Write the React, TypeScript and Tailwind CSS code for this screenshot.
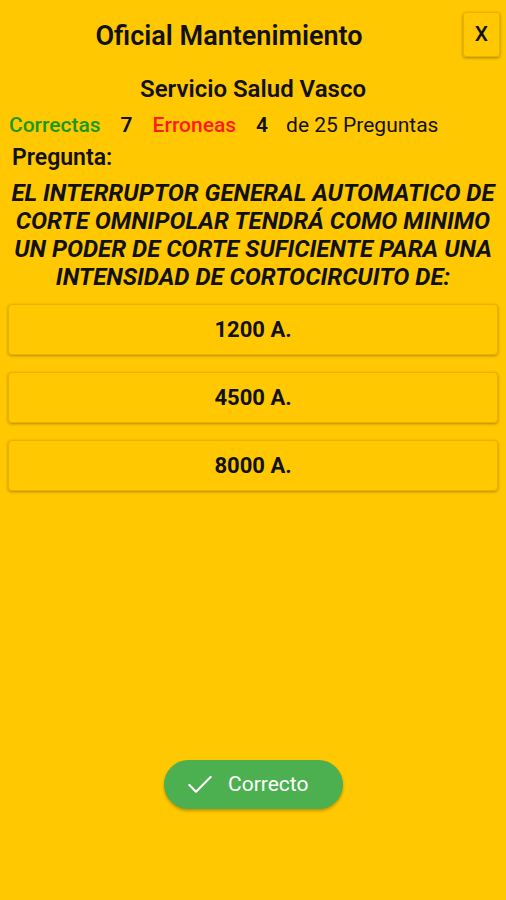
import { Check } from 'lucide-react';

const options = ['1200 A.', '4500 A.', '8000 A.'];

export default function App() {
  return (
    <div className="flex h-[900px] w-[506px] flex-col bg-[#ffc800] font-['Roboto',sans-serif] text-[#111]">
      <div className="flex items-start pr-[6px] pt-[12px]">
        <div className="mr-[5px] flex-1 pt-[8px] text-center text-[27px] font-semibold leading-[32px]">Oficial Mantenimiento</div>
        <button className="flex h-[45px] w-[37px] items-center justify-center rounded-[3px] border border-black/10 text-[21px] font-medium shadow-[0_1px_3px_rgba(0,0,0,0.35)]">
          X
        </button>
      </div>

      <div className="mt-[17px] text-center text-[24px] font-semibold leading-[30px]">Servicio Salud Vasco</div>

      <div className="mt-[8px] flex items-baseline px-[9px] text-[21px] leading-[26px]">
        <span className="font-medium text-[#169a16]">Correctas</span>
        <span className="ml-[20px] font-semibold">7</span>
        <span className="ml-[20px] font-medium text-[#ff1a1a]">Erroneas</span>
        <span className="ml-[20px] font-semibold">4</span>
        <span className="ml-[18px]">de 25 Preguntas</span>
      </div>

      <div className="mt-[7px] px-[12px] text-[23px] font-semibold leading-[26px]">Pregunta:</div>

      <div className="mt-[8px] px-[6px] text-center text-[24px] font-bold italic leading-[28px]">
        EL INTERRUPTOR GENERAL AUTOMATICO DE CORTE OMNIPOLAR TENDRÁ COMO MINIMO UN PODER DE CORTE SUFICIENTE PARA UNA INTENSIDAD DE CORTOCIRCUITO DE:
      </div>

      <div className="mt-[13px] flex flex-col gap-[17px] px-[8px]">
        {options.map((o) => (
          <button
            key={o}
            className="flex h-[51px] items-center justify-center rounded-[4px] border border-black/10 text-[22px] font-bold shadow-[0_1px_3px_rgba(0,0,0,0.3)]"
          >
            {o}
          </button>
        ))}
      </div>

      <div className="flex-1" />

      <div className="mb-[91px] flex justify-center">
        <button className="ml-[1px] flex h-[49px] w-[179px] items-center gap-[12px] rounded-full bg-[#4caf50] pl-[20px] text-[21px] text-white shadow-[0_2px_3px_rgba(0,0,0,0.25)]">
          <Check size={32} strokeWidth={1.6} />
          <span>Correcto</span>
        </button>
      </div>
    </div>
  );
}
